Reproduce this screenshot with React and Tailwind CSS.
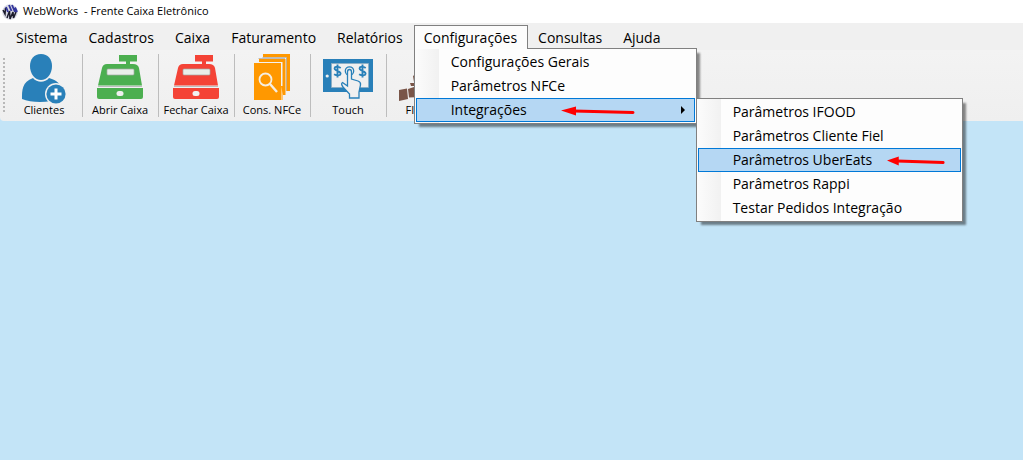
import React from "react";
import clsx from "clsx";

const menus = [
  "Sistema",
  "Cadastros",
  "Caixa",
  "Faturamento",
  "Relatórios",
  "Configurações",
  "Consultas",
  "Ajuda",
];

const integrations = [
  "Parâmetros IFOOD",
  "Parâmetros Cliente Fiel",
  "Parâmetros UberEats",
  "Parâmetros Rappi",
  "Testar Pedidos Integração",
];

const Logo = () => (
  <svg width="16" height="16" viewBox="0 0 16 16">
    <circle cx="8" cy="8" r="7.8" fill="#d8d9e4" />
    <path d="M1 6 L3 10 L3.5 4 M5 14 L7.5 7 L8 15 L11 8 L11.5 14 L14 8" fill="none" stroke="#1b1b2c" strokeWidth="1.5" />
    <path d="M4 3 L6 8 M7 1 L9.5 7 M10 1 L13 8 M13 3.5 L15 8" stroke="#34379c" strokeWidth="1.9" />
  </svg>
);

const ClientIcon = () => (
  <svg width="46" height="50" viewBox="0 0 46 50" fill="#2980b9">
    <path d="M20 0 C27 0 31 5 31 12 C31 20 26 26 20 26 C14 26 9 20 9 12 C9 5 13 0 20 0 Z" />
    <path d="M12 24 C16 29 24 29 28 24 C34 26 38 28 39 32 L30 47 C20 49 8 48 1 45 C1 36 1 28 12 24 Z" />
    <circle cx="35" cy="40" r="11" fill="#f0f0f0" />
    <circle cx="35" cy="40" r="9.6" />
    <path d="M33.5 34.5 h3 v4 h4 v3 h-4 v4 h-3 v-4 h-4 v-3 h4 Z" fill="#fff" />
  </svg>
);

const RegisterIcon = ({ color }) => (
  <svg width="46" height="50" viewBox="0 0 46 50" fill={color}>
    <path d="M22 1 H40 V7.5 H33 V10 H36 Q41 10 42 14 L45 31.5 H1 L5 14 Q6 10 10 10 H29 V7.5 H22 Z" />
    <rect x="10" y="15" width="27" height="6" rx="1" fill="#e9efe9" stroke="#a5aaa5" strokeWidth="0.7" />
    <path d="M0 34 H46 V43 Q46 45 44 45 H2 Q0 45 0 43 Z" />
    <path d="M1 32.5 H45" stroke="#bdbdbd" strokeWidth="1" />
    <rect x="19.5" y="37" width="7" height="5" rx="2.5" fill="#f0f0f0" />
  </svg>
);

const InvoiceIcon = () => (
  <svg width="46" height="50" viewBox="0 0 46 50" fill="#ff9800">
    <path d="M14 0 H41 V37 H37.5 V3 H14 Z" />
    <path d="M10 5 H36.5 V41 H33.5 V8 H10 Z" />
    <path d="M9.5 4.5 H36 M13.5 3.5 H37.5 V37" fill="none" stroke="#aaa49a" strokeWidth="0.7" />
    <path d="M5 9 H32 V32 H34 V46 H5 Z" />
    <path d="M32 32 V46 H34 V41 Z" fill="#ffc56f" />
    <circle cx="16.5" cy="25.5" r="6" fill="none" stroke="#f5eee2" strokeWidth="1.8" />
    <path d="M21 30 L28 38" stroke="#f5eee2" strokeWidth="2.4" />
  </svg>
);

const TouchIcon = () => (
  <svg width="50" height="50" viewBox="0 0 50 50">
    <rect x="0" y="5" width="50" height="33" fill="#2980b9" />
    <rect x="8.5" y="9.5" width="37" height="24" fill="#f0f0f0" stroke="#8cabc0" strokeWidth="0.7" />
    <circle cx="4.2" cy="22" r="1.6" fill="#f0f0f0" />
    {[14.5, 39.5].map((x) => (
      <path
        key={x}
        transform={`translate(${x} 17)`}
        d="M3.2 -3 Q0 -5.3 -2.5 -3.7 Q-4 -1.5 0 0 Q4.3 1.5 2.6 3.8 Q0 5.4 -3.4 3.2 M0 -6.5 V6.5"
        fill="none"
        stroke="#2980b9"
        strokeWidth="1.9"
      />
    ))}
    <circle cx="26.5" cy="17" r="4.2" fill="none" stroke="#2980b9" strokeWidth="1.3" />
    <path
      d="M24.5 18 Q24.5 15.5 26.5 15.5 Q28.5 15.5 28.5 18 V25 L35 27 Q38 28 37.5 31 L36 38 V44 H26.5 V40 L20 33 Q17.5 29.5 19.5 28.5 L24.5 32 Z"
      fill="#f0f0f0"
      stroke="#2980b9"
      strokeWidth="1.3"
    />
  </svg>
);

const FichaIcon = () => (
  <svg width="50" height="50" viewBox="0 0 50 50" fill="#795548">
    <path d="M0 36 L8 34.5 L9 45 L0 47 Z M9 35 L15 33 L22 36 V43 L10 43.5 Z M11 29 H22 V32 H12 Z M14 22 L22 16 V28 H15 Z" />
    <path d="M22 20 L36 24 V44 H22 Z" />
  </svg>
);

const tools = [
  { label: "Clientes", icon: <ClientIcon /> },
  { label: "Abrir Caixa", icon: <RegisterIcon color="#4caf50" /> },
  { label: "Fechar Caixa", icon: <RegisterIcon color="#f44336" /> },
  { label: "Cons. NFCe", icon: <InvoiceIcon /> },
  { label: "Touch", icon: <TouchIcon /> },
  { label: "FICHAS", icon: <FichaIcon /> },
];

const RedArrow = ({ className }) => (
  <svg className={className} viewBox="0 0 74 10" preserveAspectRatio="none">
    <path d="M0 4.5 L15 0.5 V9.5 Z" fill="#f00" />
    <path d="M13 5 L72 6.5" stroke="#f00" strokeWidth="3" strokeLinecap="round" />
  </svg>
);

const MenuList = ({ className, children }) => (
  <ul
    className={clsx(
      "absolute border border-[#808080] bg-[#fdfdfd] bg-linear-to-r from-[#fcfcfc] to-[#f1f1f1] bg-[length:24px_100%] bg-no-repeat p-px shadow-[4px_4px_2px_-1px_rgba(0,0,0,0.45)]",
      className
    )}
  >
    {children}
  </ul>
);

const MenuItem = ({ label, active, children }) => (
  <li className="relative">
    <button
      className={clsx(
        "flex h-6 w-full items-center border pr-2 pb-[2px] pl-[34px] text-left whitespace-nowrap",
        active ? "border-[#0078d7] bg-[#b5d7f3]" : "border-transparent"
      )}
    >
      {label}
    </button>
    {children}
  </li>
);

const ConfigMenu = () => (
  <MenuList className="top-[23px] left-0 w-[283px]">
    <MenuItem label="Configurações Gerais" />
    <MenuItem label="Parâmetros NFCe" />
    <MenuItem label="Integrações" active>
      <RedArrow className="absolute top-2 left-[145px] h-[10px] w-[74px]" />
      <svg className="absolute top-2 right-[10px] h-2 w-1" viewBox="0 0 4 8">
        <path d="M0 0 L4 4 L0 8 Z" />
      </svg>
      <MenuList className="top-0 left-[280px] w-[267px]">
        {integrations.map((label) => (
          <MenuItem key={label} label={label} active={label === "Parâmetros UberEats"}>
            {label === "Parâmetros UberEats" && (
              <RedArrow className="absolute top-2 left-[189px] h-[10px] w-[58px]" />
            )}
          </MenuItem>
        ))}
      </MenuList>
    </MenuItem>
  </MenuList>
);

const App = () => {
  return (
    <div className="min-h-screen bg-[#c3e4f7] font-['Open_Sans',sans-serif] text-[14px] text-black">
      <header className="flex h-[23px] items-center gap-[5px] bg-white pl-[2px] text-[11px]">
        <Logo />
        <h1 className="whitespace-pre">WebWorks  - Frente Caixa Eletrônico</h1>
      </header>

      <nav className="flex h-[27px] bg-[#f0f0f0] pt-[2px] pl-[6px]">
        {menus.map((label) => {
          const open = label === "Configurações";
          return (
            <div key={label} className="relative">
              <button
                className={clsx(
                  "relative h-6 border border-b-0 pr-[10px] pl-[9px]",
                  open ? "z-20 border-[#808080] bg-[#fcfcfc]" : "border-transparent"
                )}
              >
                {label}
              </button>
              {open && (
                <div className="absolute top-0 left-0 z-10">
                  <ConfigMenu />
                </div>
              )}
            </div>
          );
        })}
      </nav>

      <div className="flex h-[71px] rounded-bl-sm bg-linear-to-b from-[#f3f3f3] to-[#efefef] pt-1 pb-1 pl-[3px]">
        <div className="my-1 mr-[2px] w-[2px] bg-[repeating-linear-gradient(to_bottom,#b8b8b8_0,#b8b8b8_2px,transparent_2px,transparent_4px)]" />
        {tools.map((tool) => (
          <button
            key={tool.label}
            className="flex w-[76px] flex-col items-center border-r border-[#bdbdbd] pr-px text-[11px] leading-3 whitespace-nowrap"
          >
            {tool.icon}
            {tool.label}
          </button>
        ))}
      </div>
    </div>
  );
};

export default App;
